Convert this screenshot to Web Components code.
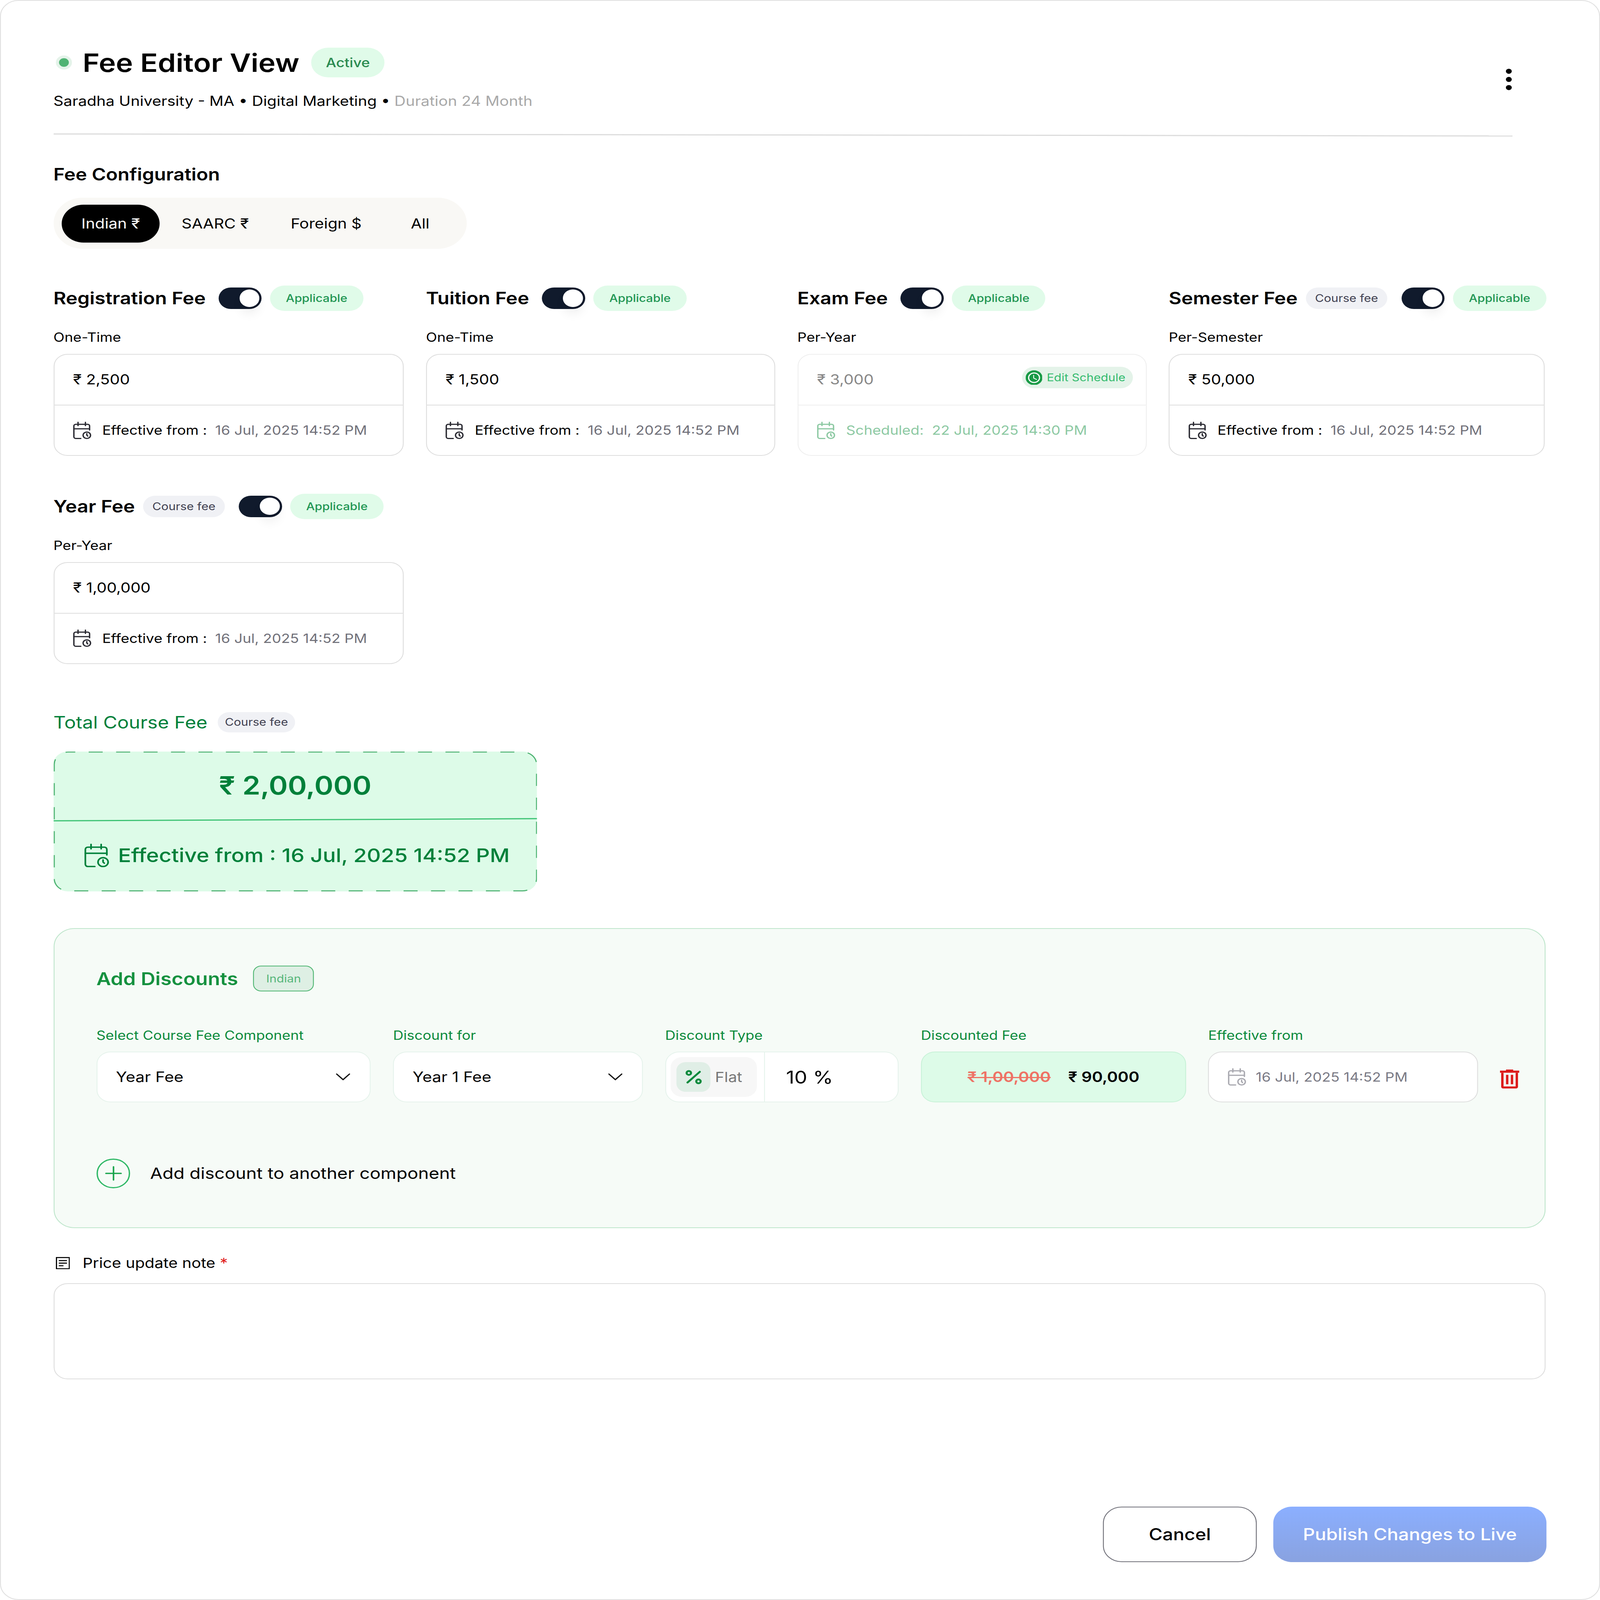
<!DOCTYPE html>
<html lang="en">
<head>
<meta charset="utf-8">
<title>Fee Editor View</title>
<style>
  html { background: #fff; }
  body { margin: 0; font-family: Inter, "Liberation Sans", sans-serif; color: #000; }
</style>
</head>
<body>
<fee-app></fee-app>
<script>
/**
 * The fee editor page, built from small web components.
 * The design is 1370 x 1568 units; fee-app scales it to fill the window.
 */

const html = (markup) => {
  const template = document.createElement('template')
  template.innerHTML = markup
  return template
}

// Shared inline icons.
const calendarIcon = (size, color, stroke = 1.5, nudge = -2) => `
  <svg width="${size}" height="${size}" viewBox="0 0 24 24" fill="none" stroke="${color}" stroke-width="${stroke}" stroke-linecap="round" stroke-linejoin="round" style="flex:none;margin-left:${nudge}px">
    <path d="M8 2v4M16 2v4M3.5 10h17"/>
    <path d="M20.5 11.5V6.5a2 2 0 0 0-2-2h-13a2 2 0 0 0-2 2v13.5a2 2 0 0 0 2 2h5.5"/>
    <circle cx="17.5" cy="18" r="4"/>
    <path d="M17.5 16v2l1 1"/>
  </svg>`

const pillTemplate = html(`
  <style>
    :host {
      display: inline-flex;
      align-items: center;
      justify-content: center;
      flex: none;
      height: 25px;
      width: 80px;
      box-sizing: border-box;
      border-radius: 13px;
      background: #e0fbe9;
      color: #219653;
      font-size: 10.4px;
      font-weight: 500;
    }
    :host([tone="grey"]) {
      height: 21px;
      width: 70px;
      border-radius: 11px;
      background: #f0f1f5;
      color: #3f3f50;
      font-weight: 400;
      font-size: 10.4px;
    }
    :host([tone="total"]) {
      height: 20px;
      width: 66px;
      border-radius: 10px;
      background: #f0f1f5;
      color: #3f3f50;
      font-weight: 400;
      font-size: 10.4px;
    }
    :host([tone="active"]) {
      height: 29px;
      width: 63px;
      border-radius: 15px;
      color: #2a8a50;
      font-size: 12.5px;
    }
    :host([tone="region"]) {
      height: 25px;
      width: 52px;
      border-radius: 7px;
      border: 1px solid #52b774;
      background: #deefe4;
      color: #56b67a;
      font-weight: 400;
    }
  </style>
  <slot></slot>
`)

/**
 * Small rounded label. The tone attribute picks its colours.
 */
customElements.define('fee-pill', class extends HTMLElement {
  constructor () {
    super()
    this.attachShadow({ mode: 'open' }).appendChild(pillTemplate.content.cloneNode(true))
  }
})

/**
 * The dark on/off switch, always shown switched on.
 */
customElements.define('fee-toggle', class extends HTMLElement {
  constructor () {
    super()
    this.attachShadow({ mode: 'open' }).innerHTML = `
      <style>
        :host {
          display: flex;
          justify-content: flex-end;
          align-items: center;
          flex: none;
          width: 37px;
          height: 21px;
          box-sizing: border-box;
          padding-right: 2px;
          border-radius: 11px;
          background: #101a2c;
        }
        div {
          width: 17px;
          height: 17px;
          border-radius: 50%;
          background: #fff;
          box-shadow: 0 7px 9px rgba(0, 0, 0, 0.06);
        }
      </style>
      <div></div>
    `
  }
})

/**
 * One fee: heading, billing period and a card with amount and date.
 */
customElements.define('fee-item', class extends HTMLElement {
  constructor () {
    super()
    const hasChip = this.hasAttribute('chip')
    const chip = hasChip ? '<fee-pill tone="grey">Course fee</fee-pill>' : ''
    const scheduled = this.hasAttribute('scheduled')
    const dateLabel = scheduled ? 'Scheduled:' : 'Effective from :'
    this.attachShadow({ mode: 'open' }).innerHTML = `
      <style>
        :host { display: block; }
        .head { display: flex; align-items: center; gap: 7px; height: 25px; }
        h3 {
          margin: 0 ${hasChip ? 0 : 4}px 0 0;
          font-size: 16.7px;
          font-weight: 600;
          line-height: 25px;
          white-space: nowrap;
        }
        fee-pill[tone="grey"] { margin-right: 5px; }
        .period { margin: 17px 0 7px; font-size: 12.4px; line-height: 18px; }
        .card {
          height: 100px;
          box-sizing: border-box;
          border: 1px solid #dedede;
          border-radius: 12px;
          display: grid;
          grid-template-rows: 49px 1fr;
        }
        .amount, .date { display: flex; align-items: center; padding: 0 11px 0 16px; }
        .amount { justify-content: space-between; font-size: 13.6px; }
        .date { border-top: 1px solid #dedede; gap: 8px; font-size: 12.5px; }
        .date b { font-weight: 400; margin-right: -1px; white-space: nowrap; }
        .date span { color: #71717a; white-space: nowrap; }
        :host([scheduled]) .card, :host([scheduled]) .date { border-color: #efefef; }
        :host([scheduled]) .amount > span { color: #888; }
        :host([scheduled]) .date b, :host([scheduled]) .date span { color: #8dc9a3; }
      </style>
      <div class="head">
        <h3>${this.getAttribute('name')}</h3>
        ${chip}
        <fee-toggle></fee-toggle>
        <fee-pill>Applicable</fee-pill>
      </div>
      <div class="period">${this.getAttribute('period')}</div>
      <div class="card">
        <div class="amount"><span>${this.getAttribute('amount')}</span><slot></slot></div>
        <div class="date">
          ${calendarIcon(19, scheduled ? '#8dc9a3' : '#2b2b33')}
          <b>${dateLabel}</b>
          <span>${this.getAttribute('date')}</span>
        </div>
      </div>
    `
  }
})

customElements.define('edit-schedule', class extends HTMLElement {
  constructor () {
    super()
    this.attachShadow({ mode: 'open' }).innerHTML = `
      <style>
        :host {
          display: inline-flex;
          align-items: center;
          gap: 3.8px;
          height: 21px;
          width: 95px;
          box-sizing: border-box;
          padding-left: 3px;
          margin-top: -4px;
          border-radius: 11px;
          background: #e4f3e9;
          color: #34bb6e;
          font-size: 10.4px;
          font-weight: 400;
          white-space: nowrap;
        }
      </style>
      <svg width="14.5" height="14.5" viewBox="0 0 24 24" fill="none" style="flex:none">
        <circle cx="12" cy="12" r="12" fill="#199a46"/>
        <circle cx="12" cy="12" r="7.7" stroke="#fff" stroke-width="1.7"/>
        <path d="M11.4 7.6v5l4.6 2.5" stroke="#fff" stroke-width="1.2"/>
      </svg>
      <slot></slot>
    `
  }
})

/**
 * The black and cream region tabs.
 */
customElements.define('region-tabs', class extends HTMLElement {
  constructor () {
    super()
    this.attachShadow({ mode: 'open' }).innerHTML = `
      <style>
        :host {
          display: inline-flex;
          height: 50px;
          box-sizing: border-box;
          padding: 7px;
          border-radius: 25px;
          background: #f9f8f5;
          font-size: 13.6px;
        }
        div { display: flex; align-items: center; justify-content: center; height: 37px; white-space: nowrap; }
        .on { width: 84px; background: #000; color: #fff; border-radius: 19px; }
        .mid { width: 95px; }
        .all { width: 66px; }
      </style>
      <div class="on">Indian ₹</div>
      <div class="mid">SAARC ₹</div>
      <div class="mid">Foreign $</div>
      <div class="all">All</div>
    `
  }
})

/**
 * The green dashed box with the total of the course.
 */
customElements.define('total-fee', class extends HTMLElement {
  constructor () {
    super()
    this.attachShadow({ mode: 'open' }).innerHTML = `
      <style>
        :host { display: block; color: #00803a; }
        .head { display: flex; align-items: center; gap: 9px; height: 20px; }
        h3 { margin: 0; font-size: 16.5px; font-weight: 400; white-space: nowrap; }
        .box {
          position: relative;
          width: 414px;
          height: 137px;
          margin-top: 19px;
          border-radius: 12px;
          background: #ddfbe8;
          display: grid;
          grid-template-rows: 66px 1fr;
        }
        .box > svg { position: absolute; inset: 0; }
        .value { display: flex; align-items: center; justify-content: center; font-size: 24.7px; font-weight: 600; }
        .date {
          position: relative;
          display: flex;
          align-items: center;
          justify-content: center;
          gap: 6px;
          font-size: 18.6px;
          font-weight: 500;
          white-space: nowrap;
        }
        .date::before {
          content: "";
          position: absolute;
          left: 0;
          right: 0;
          top: 0;
          height: 1px;
          background: #3cc273;
          transform: rotate(-0.28deg);
        }
      </style>
      <div class="head"><h3>Total Course Fee</h3><fee-pill tone="total">Course fee</fee-pill></div>
      <div class="box">
        <svg width="414" height="137" viewBox="0 0 414 137" fill="none">
          <rect x="0.5" y="0.5" width="413" height="136" rx="12" stroke="#4fb373" stroke-dasharray="12 11.5" stroke-dashoffset="6"/>
        </svg>
        <div class="value">₹ 2,00,000</div>
        <div class="date">${calendarIcon(26, '#00803a', 1.3, 0)}<span>Effective from : 16 Jul, 2025 14:52 PM</span></div>
      </div>
    `
  }
})

/**
 * A labelled field inside the discount row.
 */
customElements.define('discount-field', class extends HTMLElement {
  constructor () {
    super()
    this.attachShadow({ mode: 'open' }).innerHTML = `
      <style>
        :host { display: block; flex: none; }
        label { display: block; height: 18px; margin-bottom: 7px; font-size: 12.3px; line-height: 18px; color: #0b8a3c; white-space: nowrap; }
        .box {
          display: flex;
          align-items: center;
          height: 50px;
          box-sizing: border-box;
          border: 1px solid #e6f3ec;
          border-radius: 12px;
          background: #fff;
          font-size: 14px;
        }
        :host([tone="fee"]) .box { background: #ddfbe8; border-color: #c8f2d8; }
        :host([tone="date"]) .box { border-color: #dedede; }
      </style>
      <label>${this.getAttribute('label')}</label>
      <div class="box"><slot></slot></div>
    `
  }
})

/**
 * A select look-alike with a chevron at its end.
 */
customElements.define('fake-select', class extends HTMLElement {
  constructor () {
    super()
    this.attachShadow({ mode: 'open' }).innerHTML = `
      <style>
        :host { display: flex; align-items: center; justify-content: space-between; flex: 1; padding: 0 11px 0 16px; }
      </style>
      <slot></slot>
      <svg width="24" height="24" viewBox="0 0 24 24" fill="none" stroke="#111" stroke-width="1.1" stroke-linecap="round" stroke-linejoin="round">
        <path d="m6.5 9 5.5 5.5 5.500-5.500"/>
      </svg>
    `
  }
})

/**
 * The green panel where discounts are added.
 */
customElements.define('discount-panel', class extends HTMLElement {
  constructor () {
    super()
    this.attachShadow({ mode: 'open' }).innerHTML = `
      <style>
        :host {
          display: block;
          height: 294px;
          box-sizing: border-box;
          padding: 36px 20px 0 36px;
          border: 1px solid #bfe6cc;
          border-radius: 18px;
          background: #f6fbf7;
        }
        .head { display: flex; align-items: center; gap: 13px; height: 25px; }
        h3 { margin: 0; font-size: 17.2px; font-weight: 600; color: #15913f; white-space: nowrap; }
        .row { display: flex; align-items: flex-end; gap: 19px; margin-top: 34px; }
        .type { display: flex; align-items: center; width: 100%; height: 100%; }
        .flat {
          display: flex;
          align-items: center;
          gap: 4px;
          width: 74px;
          height: 39px;
          box-sizing: border-box;
          margin-left: 4px;
          padding-left: 5px;
          border-radius: 10px;
          background: #f7f7f7;
          color: #777;
          font-size: 13.5px;
        }
        .flat i {
          display: flex;
          align-items: center;
          justify-content: center;
          width: 29px;
          height: 29px;
          border-radius: 8px;
          background: #e0eee6;
        }
        .percent {
          display: flex;
          align-items: center;
          height: 100%;
          flex: 1;
          margin-left: 6px;
          padding-left: 18px;
          border-left: 1px solid #e6f3ec;
          font-size: 17.5px;
        }
        .prices { display: flex; align-items: center; justify-content: center; gap: 15px; width: 100%; font-weight: 600; white-space: nowrap; }
        .prices s { color: #ee7265; }
        .eff { display: flex; align-items: center; gap: 7px; padding-left: 16px; font-size: 12.5px; color: #7a7a85; white-space: nowrap; }
        .trash { flex: none; margin: 0 0 13.7px; }
        .add { display: flex; align-items: center; gap: 17px; margin-top: 55px; font-size: 15.4px; white-space: nowrap; }
        .plus {
          display: flex;
          align-items: center;
          justify-content: center;
          width: 29px;
          height: 29px;
          box-sizing: border-box;
          border: 1.5px solid #2fb866;
          border-radius: 50%;
        }
      </style>
      <div class="head"><h3>Add Discounts</h3><fee-pill tone="region">Indian</fee-pill></div>
      <div class="row">
        <discount-field label="Select Course Fee Component" style="width:235px"><fake-select>Year Fee</fake-select></discount-field>
        <discount-field label="Discount for" style="width:214px"><fake-select>Year 1 Fee</fake-select></discount-field>
        <discount-field label="Discount Type" style="width:200px">
          <div class="type">
            <div class="flat">
              <i>
                <svg width="18" height="18" viewBox="0 0 24 24" fill="none" stroke="#0b8a3c" stroke-width="2.4" stroke-linecap="round">
                  <path d="M19 5 5 19"/><circle cx="6.5" cy="6.5" r="2.5"/><circle cx="17.5" cy="17.5" r="2.5"/>
                </svg>
              </i>
              Flat
            </div>
            <div class="percent">10 %</div>
          </div>
        </discount-field>
        <discount-field label="Discounted Fee" tone="fee" style="width:227px">
          <div class="prices"><s>₹ 1,00,000</s><span>₹ 90,000</span></div>
        </discount-field>
        <discount-field label="Effective from" tone="date" style="width:231px">
          <div class="eff">${calendarIcon(19, '#a9a9b0')}<span>16 Jul, 2025 14:52 PM</span></div>
        </discount-field>
        <svg class="trash" width="16.5" height="18.6" viewBox="0 0 192 216" fill="#dc1c1c" fill-rule="evenodd">
          <path d="M60 0h72v12h60v24H0V12h60Z"/>
          <path d="M12 36h168v160a20 20 0 0 1-20 20H32a20 20 0 0 1-20-20ZM36 36v156h120V36Z"/>
          <path d="M60 60h24v108H60ZM108 60h24v108h-24Z"/>
        </svg>
      </div>
      <div class="add">
        <span class="plus">
          <svg width="16" height="16" viewBox="0 0 16 16" fill="none" stroke="#16a34a" stroke-width="1.3" stroke-linecap="round"><path d="M8 1.5v13M1.5 8h13"/></svg>
        </span>
        Add discount to another component
      </div>
    `
  }
})

/**
 * The mandatory note about the price change.
 */
customElements.define('note-field', class extends HTMLElement {
  constructor () {
    super()
    this.attachShadow({ mode: 'open' }).innerHTML = `
      <style>
        :host { display: block; }
        .label { display: flex; align-items: center; gap: 11px; height: 20px; padding-left: 2px; font-size: 13.6px; white-space: nowrap; }
        .label em { color: #e11d1d; font-style: normal; }
        .area { height: 94px; box-sizing: border-box; margin-top: 10px; border: 1px solid #dedede; border-radius: 12px; }
      </style>
      <div class="label">
        <svg width="12" height="12" viewBox="0 0 12 12" fill="none" stroke="#000" stroke-width="1"><rect x="0.5" y="0.5" width="11" height="11"/><path d="M2.5 3.5h7M2.5 6h7M2.5 8.5h4"/></svg>
        <span>Price update note <em>*</em></span>
      </div>
      <div class="area"></div>
    `
  }
})

/**
 * The buttons at the bottom of the page.
 */
customElements.define('action-bar', class extends HTMLElement {
  constructor () {
    super()
    this.attachShadow({ mode: 'open' }).innerHTML = `
      <style>
        :host { display: flex; justify-content: flex-end; gap: 14px; margin-right: -1px; }
        div {
          display: flex;
          align-items: center;
          justify-content: center;
          height: 54px;
          box-sizing: border-box;
          border-radius: 16px;
          font-size: 16px;
          font-weight: 500;
          white-space: nowrap;
        }
        .cancel { width: 132px; border: 1px solid #71717a; }
        .publish { width: 234px; color: #fff; background: linear-gradient(#8bafff, #89a2e0); }
      </style>
      <div class="cancel">Cancel</div>
      <div class="publish">Publish Changes to Live</div>
    `
  }
})

/**
 * The page itself.
 */
customElements.define('fee-app', class extends HTMLElement {
  constructor () {
    super()
    this.attachShadow({ mode: 'open' }).innerHTML = `
      <style>
        :host {
          display: block;
          width: 1370px;
          height: 1568px;
          box-sizing: border-box;
          padding: 46px 46px 0 45px;
          border: 1px solid #e0e0e0;
          border-radius: 16px;
          background: #fff;
          transform-origin: 0 0;
        }
        header { display: flex; align-items: center; justify-content: space-between; width: 1249px; }
        .title { display: flex; align-items: center; height: 29px; }
        .dot { width: 14px; height: 14px; margin: 0 9px 0 2px; border-radius: 50%; border: 3px solid #e5f3ea; background: #4fb373; box-sizing: border-box; }
        h1 { margin: 0 10px 0 0; font-size: 24.8px; font-weight: 600; }
        .sub { margin-top: 13px; font-size: 13.4px; line-height: 20px; }
        .sub span { color: #a9a9a9; }
        .rule { width: 1249px; height: 1px; margin-top: 23px; background: #dcdcdc; transform: rotate(0.09deg); }
        h2 { margin: 26px 0 11px; font-size: 16.5px; font-weight: 600; line-height: 24px; }
        .fees { display: grid; grid-template-columns: 300px 299px 299px 322px; gap: 37px 19px; margin-top: 36px; }
        total-fee { margin-top: 47px; }
        discount-panel { margin-top: 36px; }
        note-field { margin-top: 24px; }
        action-bar { margin-top: 125px; }
      </style>
      <header>
        <div>
          <div class="title">
            <i class="dot"></i>
            <h1>Fee Editor View</h1>
            <fee-pill tone="active">Active</fee-pill>
          </div>
          <div class="sub">Saradha University - MA • Digital Marketing • <span>Duration 24 Month</span></div>
        </div>
        <svg width="6" height="24" viewBox="0 0 6 24" fill="#000"><circle cx="3" cy="4" r="2.5"/><circle cx="3" cy="12" r="2.5"/><circle cx="3" cy="20" r="2.5"/></svg>
      </header>
      <div class="rule"></div>
      <h2>Fee Configuration</h2>
      <region-tabs></region-tabs>
      <section class="fees">
        <fee-item name="Registration Fee" period="One-Time" amount="₹ 2,500" date="16 Jul, 2025 14:52 PM"></fee-item>
        <fee-item name="Tuition Fee" period="One-Time" amount="₹ 1,500" date="16 Jul, 2025 14:52 PM"></fee-item>
        <fee-item name="Exam Fee" period="Per-Year" amount="₹ 3,000" date="22 Jul, 2025 14:30 PM" scheduled><edit-schedule>Edit Schedule</edit-schedule></fee-item>
        <fee-item name="Semester Fee" period="Per-Semester" amount="₹ 50,000" date="16 Jul, 2025 14:52 PM" chip></fee-item>
        <fee-item name="Year Fee" period="Per-Year" amount="₹ 1,00,000" date="16 Jul, 2025 14:52 PM" chip></fee-item>
      </section>
      <total-fee></total-fee>
      <discount-panel></discount-panel>
      <note-field></note-field>
      <action-bar></action-bar>
    `
  }

  /**
   * Scales the design to fill the window, whatever size the window really has.
   * Zoom covers the height, so the layout stays in flow; the transform takes up
   * what is left of the width. Both are 1:1 in a window of the design's shape.
   */
  connectedCallback () {
    const zoom = window.innerHeight / 1568
    this.style.zoom = zoom
    this.style.transform = `scaleX(${window.innerWidth / (1370 * zoom)})`
  }
})
</script>
</body>
</html>
